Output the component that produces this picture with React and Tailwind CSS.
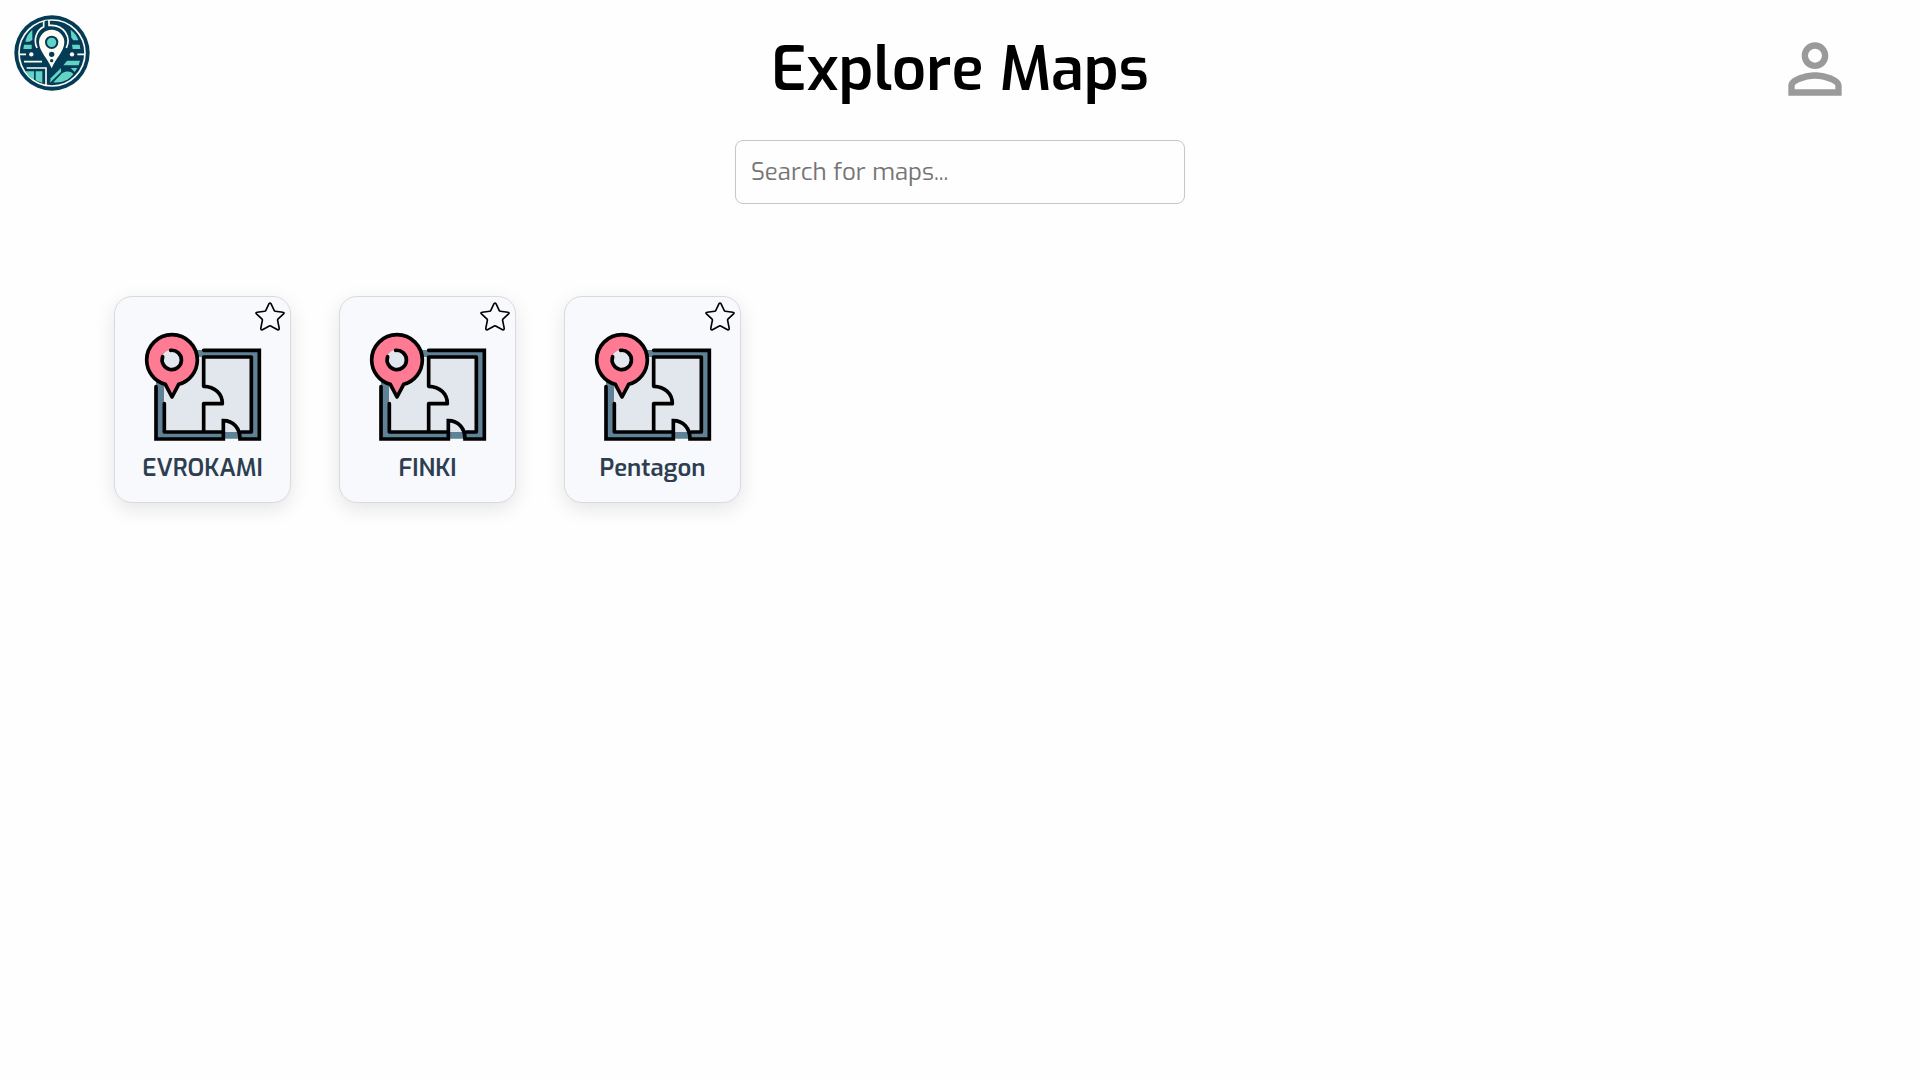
import React, { useState } from "react";

const maps = ["EVROKAMI", "FINKI", "Pentagon"];

function Logo() {
  return (
    <svg viewBox="44 44 228 228" className="block size-[76px]" aria-hidden="true">
      <defs>
        <clipPath id="logo-disc">
          <circle cx="158" cy="158" r="99" />
        </clipPath>
      </defs>
      <circle cx="158" cy="158" r="113" fill="#043b56" />
      <circle cx="158" cy="158" r="99" fill="none" stroke="#fdfdf5" strokeWidth="5" />
      <g clipPath="url(#logo-disc)">
        <g fill="#62d3c4">
          <path d="M99 88V119L90 124H78C80 110 88 98 99 88Z" />
          <path d="M74 133H97V146H72Z" />
          <path d="M214 88C226 98 234 108 237 120H222L216 112Z" />
          <path d="M218 133H241L243 146H220Z" />
          <path d="M203 181H242L238 195H192Z" />
          <path d="M78 213H104V236H94Z" />
          <path d="M109 213H129V248L109 240Z" />
          <path d="M154 234L185 203V215L152 247Z" />
          <path d="M162 246L188 219C200 210 218 212 222 222C208 240 186 249 162 246Z" />
          <path d="M214 203H234L226 215Z" />
        </g>
        <path d="M136 56H146V84H136Z" fill="#043b56" />
        <g fill="none" stroke="#fdfdf5" strokeWidth="5">
          <path d="M57 162H80M234 162H260" />
          <path d="M74 184H128M82 203H140V256" />
          <path d="M133 56V79C112 89 101 118 113 143" />
          <path d="M149 56V75H157C193 75 217 110 201 143" />
        </g>
      </g>
      <circle cx="96" cy="162" r="6.500" fill="#fdfdf5" />
      <circle cx="218" cy="162" r="6.500" fill="#fdfdf5" />
      <path d="M157 204C145 174 119 153 119 126A38 38 0 0 1 195 126C195 153 169 174 157 204Z" fill="#fdfdf5" />
      <circle cx="157" cy="126" r="17" fill="#62d3c4" stroke="#043b56" strokeWidth="6" />
      <circle cx="157" cy="162" r="8" fill="#043b56" />
      <circle cx="157" cy="181" r="5" fill="#043b56" />
    </svg>
  );
}

function PersonIcon() {
  return (
    <svg viewBox="0 0 24 24" className="block size-20" fill="#9a9a9a" aria-hidden="true">
      <path d="M12 5.900a2.100 2.100 0 1 1 0 4.200 2.100 2.100 0 0 1 0-4.200m0 9c2.970 0 6.100 1.460 6.100 2.100v1.100H5.900V17c0-.640 3.130-2.100 6.100-2.100M12 4C9.790 4 8 5.790 8 8s1.790 4 4 4 4-1.790 4-4-1.790-4-4-4zm0 9c-2.670 0-8 1.340-8 4v3h16v-3c0-2.660-5.330-4-8-4z" />
    </svg>
  );
}

function FloorPlanIcon() {
  return (
    <svg viewBox="129 150 360 342" className="block h-[114px] w-[120px]" aria-hidden="true">
      <path d="M168 210H478V476H168Z" fill="#5f8297" />
      <path d="M192 231H453V456H192Z" fill="#e1e7ed" />
      <path d="M371 456V422C400 422 419 441 420 456Z" fill="#e1e7ed" />
      <g fill="none" stroke="#000" strokeWidth="11" strokeLinecap="round" strokeLinejoin="round">
        <path d="M311 211H478V477H420C420 445 400 422 370 422V477H168V320" strokeLinejoin="miter" />
        <path d="M193 371V456H368M424 456H454V231H311V319C345 320 367 341 367 371H311V452" />
      </g>
      <path
        d="M216 164A76 76 0 0 0 140 240A76 76 0 0 0 196 313L216 351L236 313A76 76 0 0 0 292 240A76 76 0 0 0 216 164Z"
        fill="#ff7b94"
        stroke="#000"
        strokeWidth="11"
        strokeLinejoin="round"
      />
      <circle cx="216" cy="241" r="32" fill="#e1e7ed" />
      <path d="M212 211A29 29 0 1 1 188 230" fill="none" stroke="#000" strokeWidth="11" strokeLinecap="round" />
    </svg>
  );
}

function StarIcon({ filled }) {
  return (
    <svg viewBox="465 67 90 88" className="block h-[29px] w-[30px]" aria-hidden="true">
      <path
        d="M507 72Q510 68 513 72L523 93Q524 95 526 95L549 98Q555 99 551 103L534 119Q533 121 533 122L538 147Q538 153 533 151L512 140Q510 139 508 140L487 151Q482 153 482 147L487 122Q487 121 486 119L469 103Q465 99 471 98L494 95Q496 95 497 93Z"
        fill={filled ? "#facc15" : "none"}
        stroke="#000"
        strokeWidth="5"
        strokeLinejoin="round"
      />
    </svg>
  );
}

function MapCard({ name }) {
  const [favorite, setFavorite] = useState(false);
  return (
    <li className="relative w-[177px] rounded-[18px] border border-[#d9dadc] bg-[#f8f9fd] shadow-[0_6px_20px_rgba(0,0,0,0.1)]">
      <a href="#" className="flex flex-col items-center gap-2 px-2 pt-[33px] pb-[18px]">
        <FloorPlanIcon />
        <span className="text-2xl font-semibold text-[#2c3e50]">{name}</span>
      </a>
      <button
        type="button"
        aria-label={`Add ${name} to favorites`}
        aria-pressed={favorite}
        onClick={() => setFavorite(!favorite)}
        className="absolute top-[5px] right-[5px] cursor-pointer"
      >
        <StarIcon filled={favorite} />
      </button>
    </li>
  );
}

export default function App() {
  return (
    <div className="min-h-screen bg-[#fefefe] font-[Exo,'Exo_2',Roboto,sans-serif]">
      <header className="grid grid-cols-[1fr_auto_1fr] items-start">
        <a href="#" aria-label="Home" className="mt-[15px] ml-[14px] justify-self-start">
          <Logo />
        </a>
        <h1 className="mt-[38px] text-[60px] leading-[64px] font-semibold text-black">Explore Maps</h1>
        <button type="button" aria-label="Profile" className="mt-[29px] mr-[65px] cursor-pointer justify-self-end">
          <PersonIcon />
        </button>
      </header>
      <main>
        <form role="search" className="mt-[31px] flex justify-center px-4" onSubmit={(e) => e.preventDefault()}>
          <input
            type="search"
            aria-label="Search for maps"
            placeholder="Search for maps..."
            className="h-16 w-full max-w-[450px] rounded-lg border border-[#c6c6c6] bg-transparent px-[15px] text-2xl text-black placeholder:text-[#757575]"
          />
        </form>
        <ul className="mt-[92px] flex flex-wrap gap-12 px-[114px]">
          {maps.map((name) => (
            <MapCard key={name} name={name} />
          ))}
        </ul>
      </main>
    </div>
  );
}
